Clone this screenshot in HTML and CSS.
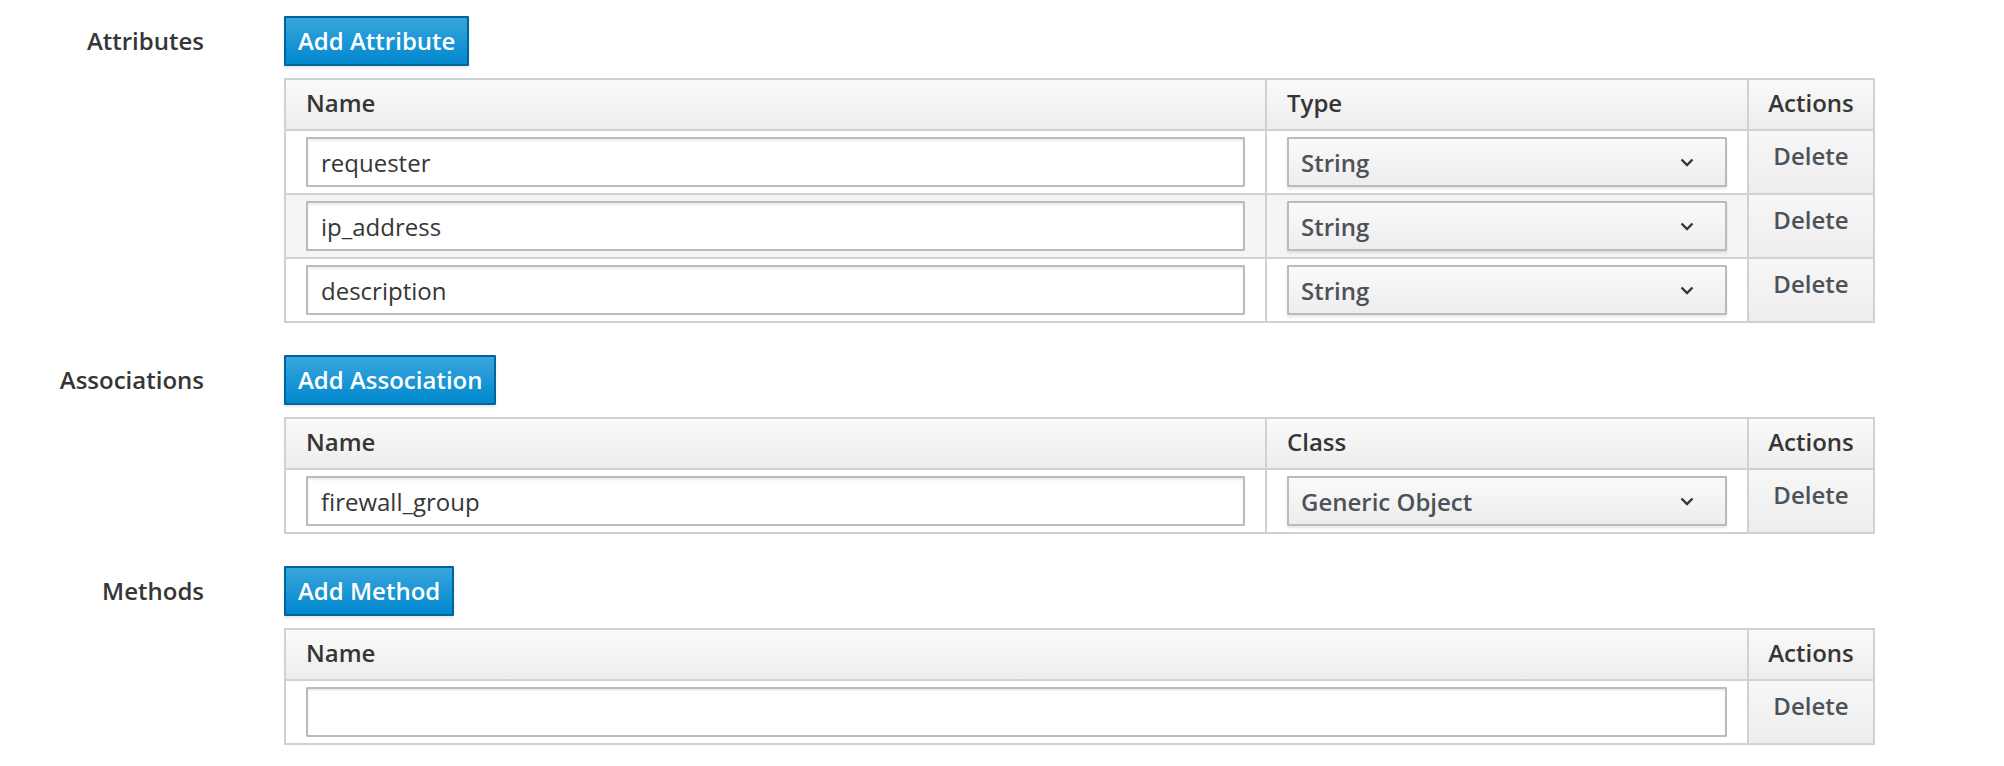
FILE: index.html
```html
<!DOCTYPE html>
<html lang="en">
<head>
<meta charset="utf-8">
<title>Generic Object Definition</title>
<link rel="stylesheet" href="styles.css">
</head>
<body>
<form class="form">
  <section class="form-row">
    <div class="row-label">Attributes</div>
    <div class="row-field">
      <button type="button" class="btn-primary">Add Attribute</button>
      <table class="grid">
        <thead>
          <tr><th class="col-name">Name</th><th class="col-type">Type</th><th class="col-actions">Actions</th></tr>
        </thead>
        <tbody>
          <tr>
            <td><input class="text-input" type="text" value="requester"></td>
            <td><button type="button" class="select-btn"><span>String</span><svg class="caret" width="14" height="9" viewBox="0 0 14 9"><polyline points="1.5,1.5 7,7 12.5,1.5" fill="none" stroke="#363636" stroke-width="2.4"/></svg></button></td>
            <td class="actions"><span class="delete">Delete</span></td>
          </tr>
          <tr class="striped">
            <td><input class="text-input" type="text" value="ip_address"></td>
            <td><button type="button" class="select-btn"><span>String</span><svg class="caret" width="14" height="9" viewBox="0 0 14 9"><polyline points="1.5,1.5 7,7 12.5,1.5" fill="none" stroke="#363636" stroke-width="2.4"/></svg></button></td>
            <td class="actions"><span class="delete">Delete</span></td>
          </tr>
          <tr>
            <td><input class="text-input" type="text" value="description"></td>
            <td><button type="button" class="select-btn"><span>String</span><svg class="caret" width="14" height="9" viewBox="0 0 14 9"><polyline points="1.5,1.5 7,7 12.5,1.5" fill="none" stroke="#363636" stroke-width="2.4"/></svg></button></td>
            <td class="actions"><span class="delete">Delete</span></td>
          </tr>
        </tbody>
      </table>
    </div>
  </section>

  <section class="form-row">
    <div class="row-label">Associations</div>
    <div class="row-field">
      <button type="button" class="btn-primary">Add Association</button>
      <table class="grid">
        <thead>
          <tr><th class="col-name">Name</th><th class="col-type">Class</th><th class="col-actions">Actions</th></tr>
        </thead>
        <tbody>
          <tr>
            <td><input class="text-input" type="text" value="firewall_group"></td>
            <td><button type="button" class="select-btn"><span>Generic Object</span><svg class="caret" width="14" height="9" viewBox="0 0 14 9"><polyline points="1.5,1.5 7,7 12.5,1.5" fill="none" stroke="#363636" stroke-width="2.4"/></svg></button></td>
            <td class="actions"><span class="delete">Delete</span></td>
          </tr>
        </tbody>
      </table>
    </div>
  </section>

  <section class="form-row">
    <div class="row-label">Methods</div>
    <div class="row-field">
      <button type="button" class="btn-primary">Add Method</button>
      <table class="grid">
        <thead>
          <tr><th class="col-name-wide">Name</th><th class="col-actions">Actions</th></tr>
        </thead>
        <tbody>
          <tr>
            <td><input class="text-input" type="text" value=""></td>
            <td class="actions"><span class="delete">Delete</span></td>
          </tr>
        </tbody>
      </table>
    </div>
  </section>
</form>
</body>
</html>
```

FILE: styles.css
```css
* {
  box-sizing: border-box;
}

body {
  margin: 0;
  background: #ffffff;
  font-family: "Open Sans", "Noto Sans", "Liberation Sans", sans-serif;
  font-size: 24px;
  color: #363636;
}

.form {
  display: flex;
  flex-direction: column;
  gap: 32px;
  padding-top: 16px;
}

.form-row {
  display: flex;
  gap: 80px;
}

.row-label {
  width: 204px;
  text-align: right;
  font-weight: 600;
  line-height: 50px;
  color: #363636;
}

.row-field {
  display: flex;
  flex-direction: column;
  align-items: flex-start;
  gap: 12px;
}

.btn-primary {
  height: 50px;
  padding: 0 12px;
  border: 2px solid #00659c;
  border-radius: 1px;
  background: linear-gradient(to bottom, #39a5dc 0%, #0088ce 100%);
  box-shadow: 0 2px 3px rgba(3, 3, 3, 0.1);
  color: #ffffff;
  font-family: "Open Sans", "Noto Sans", "Liberation Sans", sans-serif;
  font-size: 24px;
  font-weight: 600;
  line-height: 46px;
  cursor: pointer;
}

.grid {
  width: 1591px;
  table-layout: fixed;
  border-collapse: separate;
  border-spacing: 0;
  border-top: 2px solid #d1d1d1;
  border-left: 2px solid #d1d1d1;
}

.grid th,
.grid td {
  border-right: 2px solid #d1d1d1;
  border-bottom: 2px solid #d1d1d1;
  padding: 6px 20px;
  text-align: left;
  vertical-align: top;
}

.grid th {
  height: 51px;
  padding: 0 20px 3px;
  vertical-align: middle;
  background: linear-gradient(to bottom, #fafafa 0%, #ededed 100%);
  font-weight: 600;
  color: #363636;
  line-height: 30px;
}

.grid td {
  height: 64px;
}

.col-name { width: 981px; }
.col-type { width: 482px; }
.col-name-wide { width: 1463px; }
.col-actions { width: 126px; }

.grid th.col-actions {
  text-align: center;
  padding: 0 0 3px;
}

.grid tr.striped td {
  background: #f5f5f5;
}

.grid td.actions,
.grid tr.striped td.actions {
  background: linear-gradient(to bottom, #f7f7f7 0%, #ededed 100%);
  text-align: center;
  padding: 8px 0 0;
}

.delete {
  font-weight: 600;
  color: #4d5258;
}

.text-input {
  display: block;
  width: 100%;
  height: 50px;
  padding: 0 13px;
  border: 2px solid #bbbbbb;
  border-radius: 1px;
  background: #ffffff;
  box-shadow: inset 0 2px 2px rgba(3, 3, 3, 0.075);
  font-family: "Open Sans", "Noto Sans", "Liberation Sans", sans-serif;
  font-size: 24px;
  color: #363636;
  outline: none;
}

.select-btn {
  display: flex;
  align-items: center;
  justify-content: space-between;
  width: 100%;
  height: 50px;
  padding: 0 31px 0 12px;
  border: 2px solid #bbbbbb;
  border-radius: 1px;
  background: linear-gradient(to bottom, #fafafa 0%, #ededed 100%);
  box-shadow: 0 2px 3px rgba(3, 3, 3, 0.1);
  font-family: "Open Sans", "Noto Sans", "Liberation Sans", sans-serif;
  font-size: 24px;
  font-weight: 600;
  color: #4d5258;
  cursor: pointer;
}

.caret {
  display: block;
  flex: none;
}
```
